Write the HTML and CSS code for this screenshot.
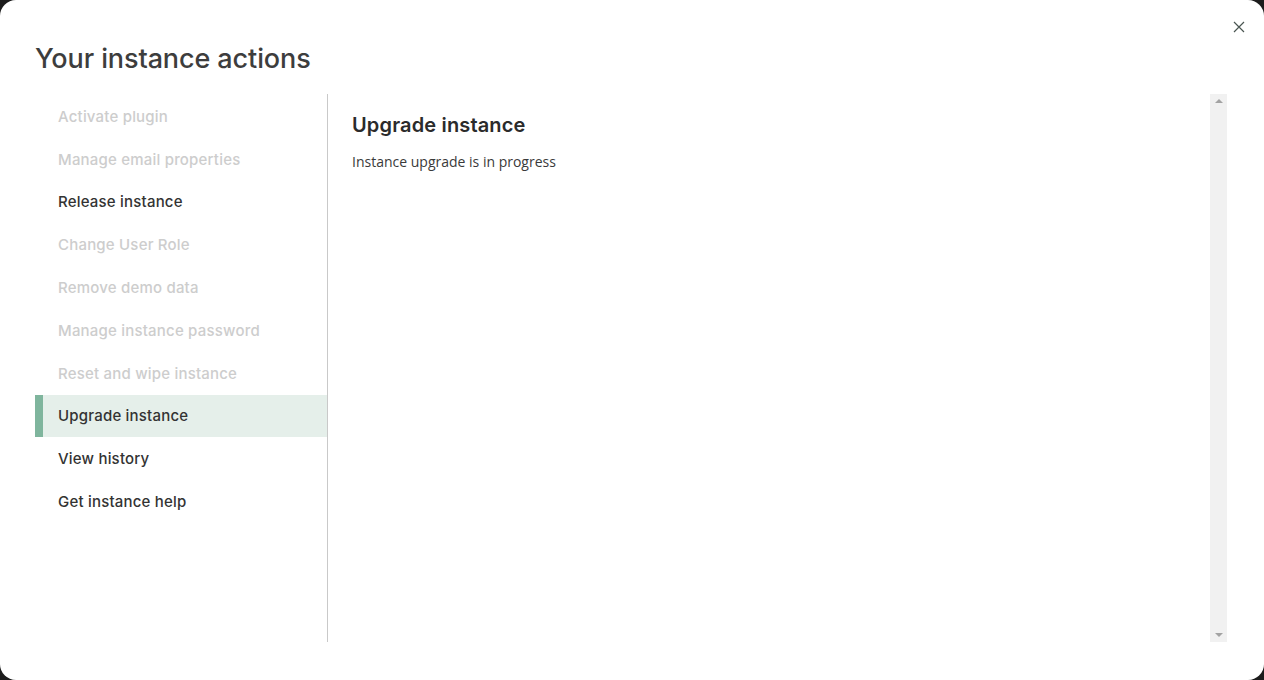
FILE: index.html
```html
<!DOCTYPE html>
<html lang="en">
<head>
<meta charset="utf-8">
<title>Your instance actions</title>
<link rel="stylesheet" href="styles.css">
</head>
<body>
<div class="modal">
  <button class="close" aria-label="Close">
    <svg width="12" height="12" viewBox="0 0 12 12"><path d="M1 1L11 11M11 1L1 11" stroke="#4a5652" stroke-width="1.2" fill="none"/></svg>
  </button>
  <h1 class="title">Your instance actions</h1>
  <div class="body">
    <nav class="menu">
      <div class="item disabled">Activate plugin</div>
      <div class="item disabled">Manage email properties</div>
      <div class="item">Release instance</div>
      <div class="item disabled">Change User Role</div>
      <div class="item disabled">Remove demo data</div>
      <div class="item disabled">Manage instance password</div>
      <div class="item disabled">Reset and wipe instance</div>
      <div class="item active">Upgrade instance</div>
      <div class="item">View history</div>
      <div class="item">Get instance help</div>
    </nav>
    <section class="panel">
      <h2 class="panel-title">Upgrade instance</h2>
      <p class="panel-text">Instance upgrade is in progress</p>
    </section>
    <div class="scrollbar">
      <span class="arrow up"></span>
      <span class="arrow down"></span>
    </div>
  </div>
</div>
</body>
</html>
```
FILE: styles.css
```css
* { box-sizing: border-box; }
html, body { margin: 0; padding: 0; height: 100%; }
body {
  background: #1c1c1c;
  font-family: "Inter", "Noto Sans", sans-serif;
  overflow: hidden;
}
.modal {
  position: relative;
  width: 1264px;
  height: 680px;
  background: #fff;
  border-radius: 16px;
  padding: 41px 37px 38px 35px;
  display: flex;
  flex-direction: column;
}
.close {
  position: absolute;
  top: 21px;
  right: 19px;
  width: 12px;
  height: 12px;
  padding: 0;
  border: 0;
  background: none;
  display: flex;
}
.title {
  margin: 0 0 17px;
  font-size: 27px;
  line-height: 36px;
  font-weight: 500;
  color: #3d3d3d;
  letter-spacing: -0.1px;
}
.body {
  flex: 1;
  display: flex;
  min-height: 0;
}
.menu {
  width: 293px;
  border-right: 1px solid #c9c9c9;
  display: flex;
  flex-direction: column;
  padding-top: 1px;
}
.item {
  height: 42.8px;
  flex: none;
  display: flex;
  align-items: center;
  padding-left: 15px;
  font-size: 15px;
  font-weight: 500;
  letter-spacing: 0.2px;
  color: #333;
  border-left: 8px solid transparent;
}
.item.disabled { color: #cdcdcd; }
.item.active {
  background: #e5efea;
  border-left-color: #7fb59d;
}
.panel {
  flex: 1;
  padding: 17px 24px;
}
.panel-title {
  margin: 0;
  font-size: 20px;
  line-height: 28px;
  font-weight: 600;
  letter-spacing: 0.15px;
  color: #2b2b2b;
}
.panel-text {
  margin: 13px 0 0;
  font-family: "Open Sans", "Noto Sans", sans-serif;
  font-size: 14px;
  line-height: 20px;
  color: #3a3a3a;
}
.scrollbar {
  width: 17px;
  background: #f1f1f1;
  display: flex;
  flex-direction: column;
  justify-content: space-between;
  align-items: center;
  padding: 5px 0;
}
.arrow {
  width: 0;
  height: 0;
  border-left: 4px solid transparent;
  border-right: 4px solid transparent;
}
.arrow.up { border-bottom: 4px solid #a3a3a3; }
.arrow.down { border-top: 4px solid #a3a3a3; }
```
